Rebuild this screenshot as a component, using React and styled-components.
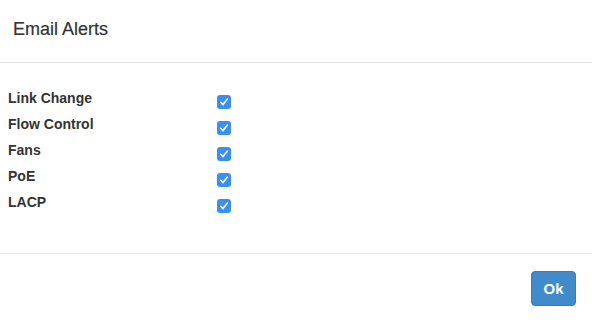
import React from "react";
import styled, { createGlobalStyle } from "styled-components";

const Global = createGlobalStyle`
  html, body { margin: 0; padding: 0; background: #fff; }
  body { font-family: "Liberation Sans", Arial, Helvetica, sans-serif; color: #333; }
`;

const Modal = styled.div`
  width: 592px;
  height: 322px;
  display: flex;
  flex-direction: column;
  background: #fff;
`;

const Header = styled.div`
  height: 63px;
  box-sizing: border-box;
  padding: 17px 13px 0;
  border-bottom: 1px solid #e5e5e5;
`;

const Title = styled.h4`
  margin: 0;
  font-size: 18px;
  font-weight: normal;
  line-height: 24px;
  color: #333;
  -webkit-text-stroke: 0.2px #333;
`;

const Body = styled.div`
  flex: 1;
  padding: 25px 8px 0;
  display: grid;
  grid-template-columns: 209px auto;
  grid-auto-rows: 26px;
  align-content: start;
`;

const Label = styled.label`
  font-size: 14px;
  font-weight: bold;
  line-height: 20px;
  color: #333;
`;

const Check = styled.span`
  margin-top: 7px;
  width: 14px;
  height: 14px;
  border-radius: 3px;
  background: #3b8fef;
  display: flex;
  align-items: center;
  justify-content: center;
`;

const Footer = styled.div`
  height: 69px;
  box-sizing: border-box;
  border-top: 1px solid #e5e5e5;
  display: flex;
  justify-content: flex-end;
  align-items: flex-start;
  padding: 17px 16px 0 0;
`;

const Button = styled.button`
  width: 45px;
  height: 35px;
  border: 1px solid #357ebd;
  border-radius: 4px;
  background: #428bca;
  color: #fff;
  font-family: "Liberation Sans", Arial, sans-serif;
  font-size: 15px;
  font-weight: bold;
  padding: 0;
`;

const CheckIcon = () => (
  <svg width="10" height="10" viewBox="0 0 10 10">
    <path d="M1.8 5.3 L4 7.6 L8.3 2.2" fill="none" stroke="#fff" strokeWidth="1.6" strokeLinecap="round" strokeLinejoin="round" />
  </svg>
);

const items = ["Link Change", "Flow Control", "Fans", "PoE", "LACP"];

export default function App() {
  return (
    <>
      <Global />
      <Modal>
        <Header>
          <Title>Email Alerts</Title>
        </Header>
        <Body>
          {items.map((t) => (
            <React.Fragment key={t}>
              <Label>{t}</Label>
              <div>
                <Check><CheckIcon /></Check>
              </div>
            </React.Fragment>
          ))}
        </Body>
        <Footer>
          <Button>Ok</Button>
        </Footer>
      </Modal>
    </>
  );
}
